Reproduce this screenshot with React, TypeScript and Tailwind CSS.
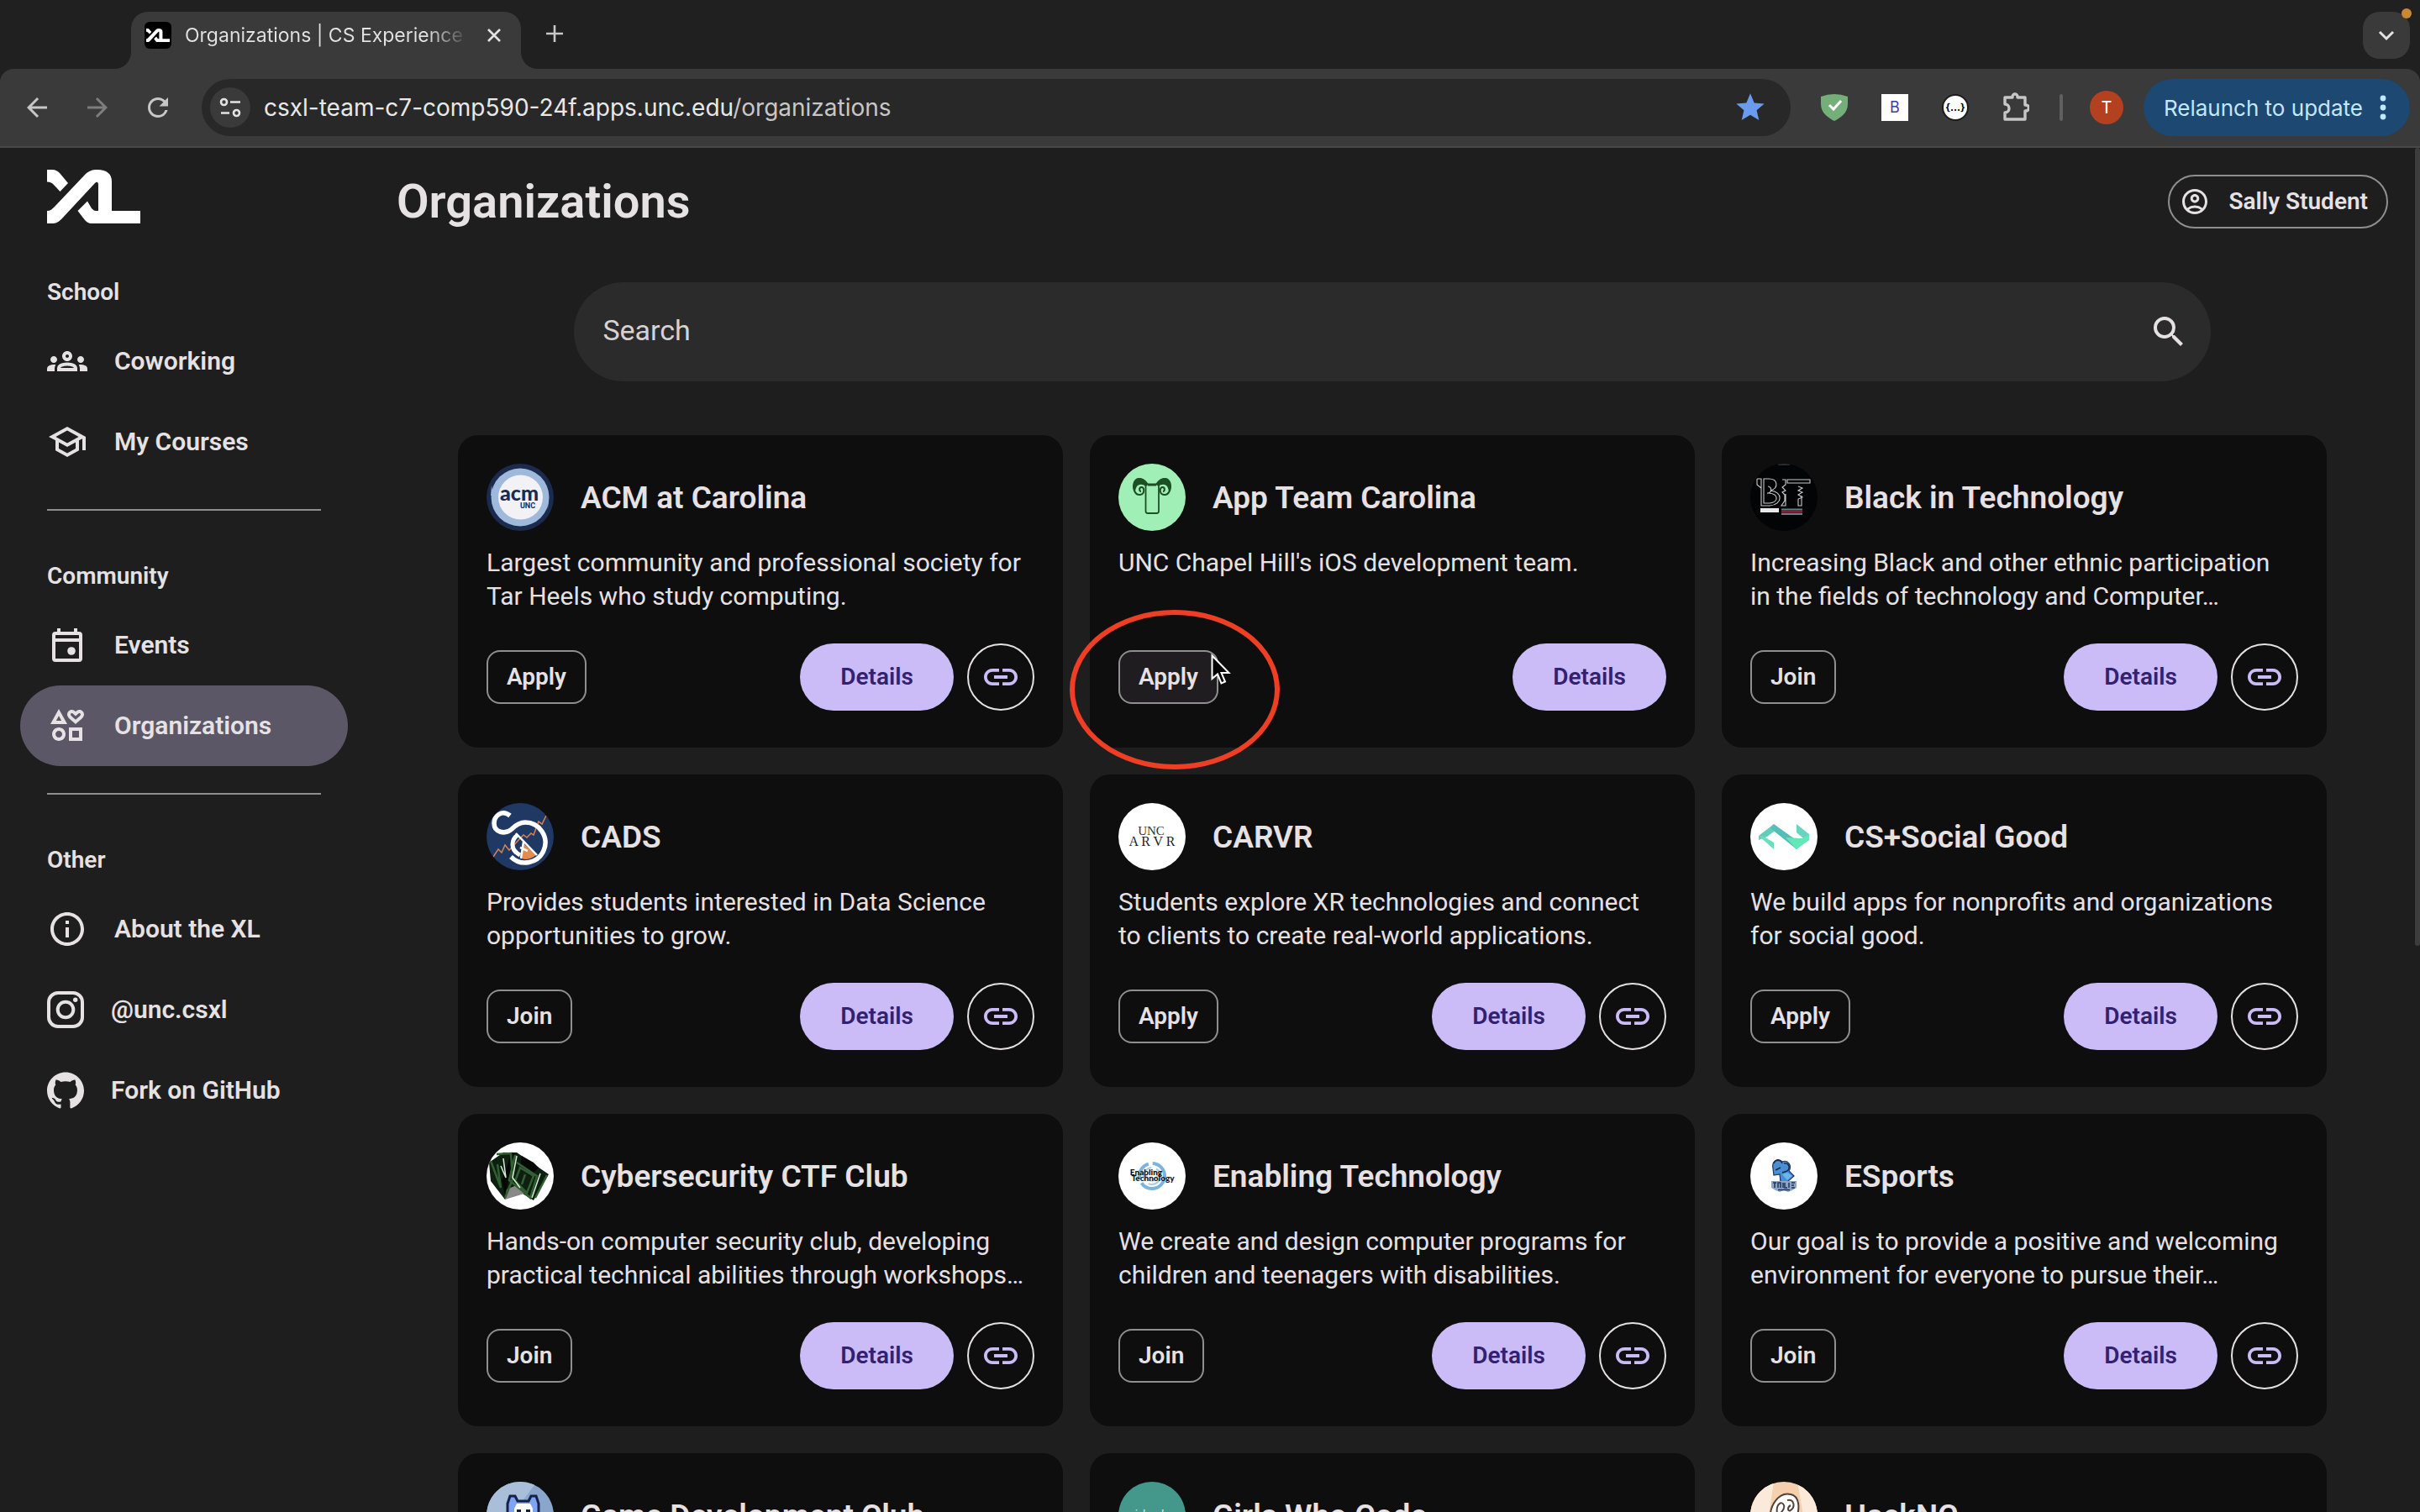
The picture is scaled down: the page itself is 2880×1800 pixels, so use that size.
import type { ReactNode } from "react";
import {
  MdArrowBack,
  MdArrowForward,
  MdLink,
  MdOutlineAccountCircle,
  MdOutlineGroups,
  MdOutlineInfo,
  MdOutlineInterests,
  MdOutlineSchool,
  MdRefresh,
  MdSearch,
  MdStar,
} from "react-icons/md";
import { SiGithub } from "react-icons/si";

/* ---------- logo and small icons ---------- */

function XlMark({ className }: { className: string }) {
  return (
    <svg viewBox="0 0 111 64" className={className} fill="#ffffff" aria-hidden="true">
      <path d="M0 0H6C10 0 13 2 15 4L25 16L15.5 26L8 18C6 16 4 14.500 0 14.500Z" />
      <path d="M0 49C4 49 6 47 9 44L45 6C50 1 54 0 60 0C71 0 77 5 77 14V49H111V64H53C49 64 47 62 45 60L36.500 49L48 37.500L53 46C55 48 56 49 58 49H61V18C61 14 59 14 57 16L17 59C13 63 10 64 6 64H0Z" />
    </svg>
  );
}

function CalendarIcon() {
  return (
    <svg viewBox="0 0 24 24" className="size-12" fill="none" stroke="currentColor" strokeWidth="2" aria-hidden="true">
      <rect x="4" y="5" width="16" height="16" rx="1" />
      <path d="M4 9H20M7 2V5M17 2V5" />
      <circle cx="14.500" cy="15.500" r="2.400" fill="currentColor" stroke="none" />
    </svg>
  );
}

function InstagramIcon() {
  return (
    <svg viewBox="0 0 44 44" className="size-11" fill="none" stroke="currentColor" strokeWidth="4" aria-hidden="true">
      <rect x="2" y="2" width="40" height="40" rx="11" />
      <circle cx="22" cy="22" r="9.300" />
      <circle cx="33.700" cy="10.300" r="2.700" fill="currentColor" stroke="none" />
    </svg>
  );
}

/* ---------- browser chrome ---------- */

function TabStrip() {
  return (
    <div className="flex h-[82px] items-end bg-[#202020] pr-3 pl-[136px]">
      <div className="size-5 bg-[#3a3a3a]">
        <div className="size-5 rounded-br-[20px] bg-[#202020]" />
      </div>
      <div className="flex h-[68px] w-[464px] items-center rounded-t-[20px] bg-[#3a3a3a] pr-5 pb-3 pl-4">
        <span className="flex size-8 shrink-0 items-center justify-center rounded-md bg-black">
          <XlMark className="w-7" />
        </span>
        <span className="ml-4 w-[338px] overflow-hidden bg-gradient-to-r from-[#e3e3e3] from-85% to-transparent bg-clip-text font-['Inter',sans-serif] text-[23px] whitespace-nowrap text-transparent">
          Organizations | CS Experience
        </span>
        <button type="button" aria-label="Close tab" className="ml-auto text-[#e3e3e3]">
          <svg viewBox="0 0 24 24" className="size-6" stroke="currentColor" strokeWidth="2.600" aria-hidden="true">
            <path d="M5 5L19 19M19 5L5 19" />
          </svg>
        </button>
      </div>
      <div className="size-5 bg-[#3a3a3a]">
        <div className="size-5 rounded-bl-[20px] bg-[#202020]" />
      </div>
      <button type="button" aria-label="New tab" className="mb-[30px] ml-2 text-[#c7c7c7]">
        <svg viewBox="0 0 24 24" className="size-6" stroke="currentColor" strokeWidth="2.600" aria-hidden="true">
          <path d="M12 2V22M2 12H22" />
        </svg>
      </button>
      <button
        type="button"
        aria-label="Search tabs"
        className="relative mb-3 ml-auto flex size-14 items-center justify-center rounded-[20px] bg-[#3a3a3a] text-[#e3e3e3]"
      >
        <svg viewBox="0 0 24 24" className="size-6" fill="none" stroke="currentColor" strokeWidth="3" aria-hidden="true">
          <path d="M4 8L12 16L20 8" />
        </svg>
        <span className="absolute -top-1 -right-0.5 size-3 rounded-full bg-[#cc8830]" />
      </button>
    </div>
  );
}

function Toolbar() {
  return (
    <div className="bg-[#202020]">
      <div className="flex h-[94px] items-center rounded-t-[16px] border-b-2 border-[#484848] bg-[#3a3a3a] pr-3 pl-[26px] font-['Inter',sans-serif]">
        <button type="button" aria-label="Back" className="text-[#c7c7c7]">
          <MdArrowBack className="size-9" />
        </button>
        <button type="button" aria-label="Forward" className="ml-9 text-[#7d7d7d]">
          <MdArrowForward className="size-9" />
        </button>
        <button type="button" aria-label="Reload" className="ml-9 text-[#c7c7c7]">
          <MdRefresh className="size-9" />
        </button>

        <div className="ml-[34px] flex h-[68px] flex-1 items-center rounded-full bg-[#282828] pr-7 pl-[10px]">
          <button
            type="button"
            aria-label="View site information"
            className="flex size-12 items-center justify-center rounded-full bg-[#3a3a3a] text-[#e3e3e3]"
          >
            <svg viewBox="0 0 28 28" className="size-7" fill="none" stroke="currentColor" strokeWidth="2.600" aria-hidden="true">
              <circle cx="6.500" cy="7.500" r="3.500" />
              <path d="M14 7.500H26M3 20.500H13" />
              <circle cx="21.500" cy="20.500" r="3.500" />
            </svg>
          </button>
          <span className="ml-4 flex-1 text-[28px] text-[#e8e8e8]">
            csxl-team-c7-comp590-24f.apps.unc.edu<span className="text-[#c7c7c7]">/organizations</span>
          </span>
          <button type="button" aria-label="Edit bookmark" className="text-[#6b9bef]">
            <MdStar className="size-10" />
          </button>
        </div>

        <div className="ml-9 flex items-center gap-10">
          <svg viewBox="0 0 32 32" className="size-8" aria-hidden="true">
            <path d="M0 3Q16 -3 32 3V12C32 22 24 28 16 32C8 28 0 22 0 12Z" fill="#74ae78" />
            <path d="M10 13L15 18L24 8" fill="none" stroke="#ffffff" strokeWidth="3" />
          </svg>
          <span className="flex size-8 items-center justify-center bg-white text-lg text-[#3c3aa8]">B</span>
          <span className="flex size-8 items-center justify-center rounded-full border-2 border-[#1c1c1c] bg-white text-xs font-bold text-black">
            {"{...}"}
          </span>
          <svg viewBox="0 0 32 36" className="h-9 w-8" fill="none" stroke="#c7c7c7" strokeWidth="3.400" aria-hidden="true">
            <path d="M3 6H12V5A3 3 0 0 1 18 5V6H27V15H28A3.500 3.500 0 0 1 28 22H27V32H3V24A5 5 0 0 0 3 14Z" strokeLinejoin="round" />
          </svg>
        </div>
        <span className="ml-9 h-8 w-1 rounded-full bg-[#606060]" />
        <span className="ml-8 flex size-10 items-center justify-center rounded-full bg-[#b3401f] text-xl text-white">T</span>
        <button
          type="button"
          className="ml-6 flex h-[68px] items-center gap-5 rounded-full bg-[#1c4872] pr-7 pl-6 text-[26px] text-[#c2e7ff]"
        >
          Relaunch to update
          <svg viewBox="0 0 8 32" className="h-8 w-2" fill="currentColor" aria-hidden="true">
            <circle cx="4" cy="5" r="3.400" />
            <circle cx="4" cy="16" r="3.400" />
            <circle cx="4" cy="27" r="3.400" />
          </svg>
        </button>
      </div>
    </div>
  );
}

/* ---------- sidebar ---------- */

function NavItem({ icon, label, active = false }: { icon: ReactNode; label: string; active?: boolean }) {
  return (
    <a
      href="#"
      className={
        active
          ? "flex h-24 items-center gap-8 rounded-full bg-[#5c5767] px-8"
          : "flex h-24 items-center gap-8 rounded-full px-8"
      }
    >
      {icon}
      <span className="pb-0.5">{label}</span>
    </a>
  );
}

function NavLabel({ children }: { children: string }) {
  return <h2 className="flex h-[72px] items-center px-8 pt-1 text-[28px]">{children}</h2>;
}

function NavDivider() {
  return <hr className="mx-8 mt-8 mb-10 border-t-2 border-[#8f8f8f]" />;
}

function Sidebar() {
  return (
    <nav className="w-[440px] shrink-0 pr-[26px] pl-6 text-[30px] font-semibold">
      <a href="#" aria-label="Home" className="block px-8 pt-[26px] pb-11">
        <XlMark className="h-16" />
      </a>
      <NavLabel>School</NavLabel>
      <NavItem icon={<MdOutlineGroups className="size-12" />} label="Coworking" />
      <NavItem icon={<MdOutlineSchool className="size-12" />} label="My Courses" />
      <NavDivider />
      <NavLabel>Community</NavLabel>
      <NavItem icon={<CalendarIcon />} label="Events" />
      <NavItem icon={<MdOutlineInterests className="size-12" />} label="Organizations" active />
      <NavDivider />
      <NavLabel>Other</NavLabel>
      <NavItem icon={<MdOutlineInfo className="size-12" />} label="About the XL" />
      <NavItem icon={<InstagramIcon />} label="@unc.csxl" />
      <NavItem icon={<SiGithub className="size-11" />} label="Fork on GitHub" />
    </nav>
  );
}

/* ---------- organization logos ---------- */

function Logo({ children, bg }: { children: ReactNode; bg: string }) {
  return (
    <svg viewBox="0 0 80 80" className="size-20 shrink-0 rounded-full" aria-hidden="true">
      <rect width="80" height="80" fill={bg} />
      {children}
    </svg>
  );
}

const acmLogo = (
  <Logo bg="#1b2b4d">
    <circle cx="40" cy="40" r="34.500" fill="#9fb9dc" />
    <circle cx="40.500" cy="40" r="26.500" fill="#f2f1f5" />
    <path d="M5 38L6 26L8 38ZM74 38L73 54L71 40Z" fill="#9fb9dc" />
    <text x="39" y="44" textAnchor="middle" fontFamily="Lato, sans-serif" fontWeight="900" fontSize="25" fill="#1b2b4d">
      acm
    </text>
    <text x="49" y="53" textAnchor="middle" fontFamily="Roboto, sans-serif" fontWeight="700" fontSize="9" fill="#1b2b4d">
      UNC
    </text>
  </Logo>
);

const appTeamLogo = (
  <Logo bg="#a0efb6">
    <path
      d="M33 24C30 18 22 15 19 22C16 29 20 38 26 37C32 36 31 27 27 28C24 29 25 33 27 33M47 24C50 18 58 15 61 22C64 29 60 38 54 37C48 36 49 27 53 28C56 29 55 33 53 33"
      fill="none"
      stroke="#1d4f24"
      strokeWidth="2"
    />
    <path d="M36 25C32 17 24 15 20 20C17 25 18 32 20 35C20 28 23 24 28 25C31 25 32 27 33 28ZM44 25C48 17 56 15 60 20C63 25 62 32 60 35C60 28 57 24 52 25C49 25 48 27 47 28Z" fill="#1d4f24" />
    <rect x="32.500" y="24.500" width="15.500" height="34.500" rx="2.500" fill="#a0efb6" stroke="#1d4f24" strokeWidth="1.800" />
    <path d="M35 25.500H45" stroke="#1d4f24" strokeWidth="2" />
  </Logo>
);

const bitLogo = (
  <Logo bg="#030405">
    <path d="M33 1H47" stroke="#3d3d3d" strokeWidth="1.500" />
    <g fill="none" stroke="#c9cccb" strokeWidth="1.100">
      <path d="M8 18H13V50H23C39 49 39 33 24 32C34 29 33 18 22 18H16V47H23C34 46 34 36 22 35M8 18V25L13 29M21 27C26 27 26 36 20 35" />
      <path d="M38 19H42V25L38 28L42 32L38 34L41 37V44L37 50H42V36" />
      <path d="M44 19H71V23H44ZM57 27L62 29L57 32L62 34L57 37L62 40L57 42V50H61V38" />
    </g>
    <rect x="12" y="53" width="22" height="5" fill="#e8e8e8" />
    <path d="M37 54.500H62M37 60H62" stroke="#5c8488" strokeWidth="2" />
    <path d="M37 57.200H62" stroke="#7e2236" strokeWidth="3" />
  </Logo>
);

const cadsLogo = (
  <Logo bg="#1f3864">
    <path d="M8 64L14 55L18 59L22 50L27 56L40 42L44 38L48 41L53 36L56 38L62 22L66 25L71 15" fill="none" stroke="#d98350" strokeWidth="1.500" />
    <path d="M28 15C18 7 9 16 9 24C9 35 22 38 30 31C36 25 41 23 46 23A24 24 0 1 1 29 64" fill="none" stroke="#ffffff" strokeWidth="5.500" />
    <path d="M44 48L59 62Q50 69 42 66Z" fill="#e48c4f" />
    <path d="M37 38C29 44 28 56 40 62" fill="none" stroke="#ffffff" strokeWidth="5" />
    <path d="M35 36L60 62M44 46L41 66M40 53L49 57" fill="none" stroke="#ffffff" strokeWidth="2.500" />
  </Logo>
);

const carvrLogo = (
  <Logo bg="#ffffff">
    <text x="39" y="38" textAnchor="middle" fontFamily="'Liberation Serif', serif" fontSize="15" fill="#333333">
      UNC
    </text>
    <text x="40" y="51" textAnchor="middle" fontFamily="'Liberation Serif', serif" fontSize="16" fill="#222222">
      A R V R
    </text>
  </Logo>
);

const socialGoodLogo = (
  <Logo bg="#ffffff">
    <path d="M28 25L10 39V44L20 40L28 34Z" fill="#62cdbb" />
    <path d="M10 39L28 55V47L16 40Z" fill="#66dfba" />
    <path d="M28 25L60 48L55 55L24 30Z" fill="#55bfb7" />
    <path d="M42 41L60 42L70 42L55 55Z" fill="#64e6b9" />
    <path d="M55 25L70 37V44L62 48L63 42L55 35Z" fill="#69d5c0" />
    <path d="M70 38V44L55 55L53 46Z" fill="#63e8b8" />
  </Logo>
);

const ctfLogo = (
  <Logo bg="#ffffff">
    <path d="M3 24L20 12L36 12L74 38L56 69L38 58L22 68L5 46Z" fill="#0d1f10" />
    <path d="M30 12L34 14L22 62L18 46ZM42 16L40 30L52 40L62 30L56 24Z" fill="#050705" />
    <path d="M24 56L38 50L48 60L22 68Z" fill="#888888" />
    <path d="M12 14L29 13L31 44L22 66M5 22L17 54L13 26M34 15L27 45L43 58L52 66L60 40L36 24M72 39L58 66M40 30L56 40L48 60L34 46ZM46 38L42 50" fill="none" stroke="#315f31" strokeWidth="2.500" />
    <path d="M20 19L23 42L17 28M36 16L31 42L40 54M64 37L54 66" fill="none" stroke="#d7ecd6" strokeWidth="1.500" />
  </Logo>
);

const enablingLogo = (
  <Logo bg="#ffffff">
    <g fill="none" stroke="#7db4dd">
      <circle cx="40" cy="40" r="15" strokeWidth="4" strokeDasharray="38 6 22 5" />
      <circle cx="40" cy="40" r="10" strokeWidth="2" strokeDasharray="20 6" stroke="#a5cdea" />
      <circle cx="40" cy="40" r="6" strokeWidth="2" stroke="#c3dff1" />
    </g>
    <text x="33" y="39" textAnchor="middle" fontFamily="Lato, sans-serif" fontWeight="900" fontSize="10" fill="#111111">
      Enabling
    </text>
    <text x="41" y="46" textAnchor="middle" fontFamily="Lato, sans-serif" fontWeight="900" fontSize="10" fill="#111111">
      Technology
    </text>
  </Logo>
);

const esportsLogo = (
  <Logo bg="#ffffff">
    <path d="M27 31C25 22 33 18 38 23C45 20 50 28 46 34L52 40L44 47H36L35 38L28 39Z" fill="#4a8fd4" stroke="#1c355f" strokeWidth="1.200" />
    <path d="M28 25C30 20 36 20 38 25M40 25C46 24 48 30 44 34M38 36L44 34M30 33L36 30" fill="none" stroke="#16294a" strokeWidth="1.400" />
    <path d="M38 38L44 36L50 40L44 45Z" fill="#6fb5ec" />
    <path d="M25 46H55V54L50 57L45 59L40 57L35 59L30 57L25 54Z" fill="#8ea4c2" />
    <path d="M27 48H31M29 48V54M33 54V48H36V54M39 54V48M41 48V54H44M46 48V54M49 48H53M49 51H52M49 54H53M33 56.500H47" fill="none" stroke="#1c355f" strokeWidth="1.500" />
  </Logo>
);

const gameDevLogo = (
  <Logo bg="#8aa6cd">
    <path d="M0 0H60L0 80Z" fill="#a9bfd9" />
    <path d="M25 50V26L28 17H34L37 23H50L53 17H59L62 26V50Z" fill="#7fa4f2" stroke="#16204a" strokeWidth="3" />
    <path d="M36 26H52L55 32V50H33V32Z" fill="#ffffff" />
    <path d="M36 33H41V39H36ZM47 33H52V39H47Z" fill="#16204a" />
  </Logo>
);

const girlsLogo = (
  <Logo bg="#43978b">
    <text x="38" y="43" textAnchor="middle" fontFamily="'Liberation Serif', serif" fontStyle="italic" fontSize="14" fill="#d8efeb">
      girls who
    </text>
  </Logo>
);

const hackLogo = (
  <Logo bg="#f6cfae">
    <path d="M0 0H28L16 80H0ZM56 0H80V80H70Z" fill="#fbe9da" />
    <path d="M24 46C22 28 34 12 48 15C58 17 60 30 54 46Z" fill="#ffffff" stroke="#54423a" strokeWidth="2" />
    <path d="M32 38C30 26 38 22 40 28C42 34 34 38 32 42M44 22C52 20 54 30 48 34C44 36 44 30 48 28M40 42L50 38" fill="none" stroke="#54423a" strokeWidth="2" />
  </Logo>
);

/* ---------- organization cards ---------- */

type Org = {
  name: string;
  text: string;
  action: "Apply" | "Join";
  logo: ReactNode;
  site?: boolean;
  hovered?: boolean;
};

const orgs: Org[] = [
  { name: "ACM at Carolina", text: "Largest community and professional society for Tar Heels who study computing.", action: "Apply", logo: acmLogo },
  { name: "App Team Carolina", text: "UNC Chapel Hill's iOS development team.", action: "Apply", logo: appTeamLogo, site: false, hovered: true },
  { name: "Black in Technology", text: "Increasing Black and other ethnic participation in the fields of technology and Computer…", action: "Join", logo: bitLogo },
  { name: "CADS", text: "Provides students interested in Data Science opportunities to grow.", action: "Join", logo: cadsLogo },
  { name: "CARVR", text: "Students explore XR technologies and connect to clients to create real-world applications.", action: "Apply", logo: carvrLogo },
  { name: "CS+Social Good", text: "We build apps for nonprofits and organizations for social good.", action: "Apply", logo: socialGoodLogo },
  { name: "Cybersecurity CTF Club", text: "Hands-on computer security club, developing practical technical abilities through workshops…", action: "Join", logo: ctfLogo },
  { name: "Enabling Technology", text: "We create and design computer programs for children and teenagers with disabilities.", action: "Join", logo: enablingLogo },
  { name: "ESports", text: "Our goal is to provide a positive and welcoming environment for everyone to pursue their…", action: "Join", logo: esportsLogo },
  { name: "Game Development Club", text: "", action: "Join", logo: gameDevLogo },
  { name: "Girls Who Code", text: "", action: "Join", logo: girlsLogo },
  { name: "HackNC", text: "", action: "Join", logo: hackLogo },
];

function Annotation() {
  return (
    <>
      <span className="absolute top-[208px] -left-6 z-10 h-[190px] w-[250px] rounded-[50%] border-6 border-[#ee3e23]" />
      <svg viewBox="0 0 24 38" className="absolute top-[260px] left-36 z-10 h-[38px] w-6" aria-hidden="true">
        <path d="M1.500 2.500V30L8 24.500L12.500 35.500L17 33.500L12.500 23H21.500Z" fill="#000000" stroke="#ffffff" strokeWidth="2" />
      </svg>
    </>
  );
}

function OrgCard({ org }: { org: Org }) {
  return (
    <article className="relative rounded-3xl bg-[#0e0e0e] px-[34px] pt-[34px] pb-11">
      <header className="flex items-center gap-8">
        {org.logo}
        <h3 className="text-[37px] leading-none font-semibold">{org.name}</h3>
      </header>
      <p className="mt-[18px] h-20 pr-2 text-[30px] leading-10">{org.text}</p>
      <div className="mt-9 flex items-center gap-4">
        <button
          type="button"
          className={
            org.hovered
              ? "mr-auto h-16 rounded-2xl border-2 border-[#8f8f8f] bg-[#1f1d1f] px-[22px] text-[28px] font-semibold"
              : "mr-auto h-16 rounded-2xl border-2 border-[#8f8f8f] px-[22px] text-[28px] font-semibold"
          }
        >
          {org.action}
        </button>
        <button type="button" className="h-20 rounded-full bg-[#cbbcf7] px-12 text-[28px] font-semibold text-[#33206f]">
          Details
        </button>
        {org.site !== false && (
          <a
            href="#"
            aria-label={`${org.name} website`}
            className="flex size-20 items-center justify-center rounded-full border-2 border-[#e6e1e3] text-[#cbbcf7]"
          >
            <MdLink className="size-12" />
          </a>
        )}
      </div>
      {org.hovered && <Annotation />}
    </article>
  );
}

export default function App() {
  return (
    <div className="flex h-screen flex-col overflow-hidden bg-[#1e1e1e] font-['Roboto',sans-serif] text-[#e6e1e3]">
      <div className="shrink-0">
        <TabStrip />
        <Toolbar />
      </div>
      <div className="flex min-h-0 flex-1">
        <Sidebar />
        <main className="min-w-0 flex-1 overflow-hidden">
          <div className="flex h-32 items-center justify-between px-8">
            <h1 className="text-[56px] leading-none font-semibold">Organizations</h1>
            <button type="button" className="flex h-16 items-center gap-[22px] rounded-full border-2 border-[#8f8f8f] pr-[22px] pl-3 text-[28px] font-semibold">
              <MdOutlineAccountCircle className="size-9" />
              Sally Student
            </button>
          </div>
          <label className="mx-auto mt-8 flex h-[118px] w-4/5 items-center rounded-full bg-[#2b2b2b] pr-[26px] pl-[34px]">
            <input
              type="text"
              aria-label="Search"
              placeholder="Search"
              className="min-w-0 flex-1 bg-transparent pb-1 text-[34px] outline-none placeholder:text-[#d6d2d4]"
            />
            <MdSearch className="size-12" />
          </label>
          <div className="mt-16 grid grid-cols-3 gap-8 px-[105px]">
            {orgs.map((org) => (
              <OrgCard key={org.name} org={org} />
            ))}
          </div>
        </main>
        <div className="h-[950px] w-[6px] shrink-0 rounded-full bg-[#3d3d3d]" />
      </div>
    </div>
  );
}
